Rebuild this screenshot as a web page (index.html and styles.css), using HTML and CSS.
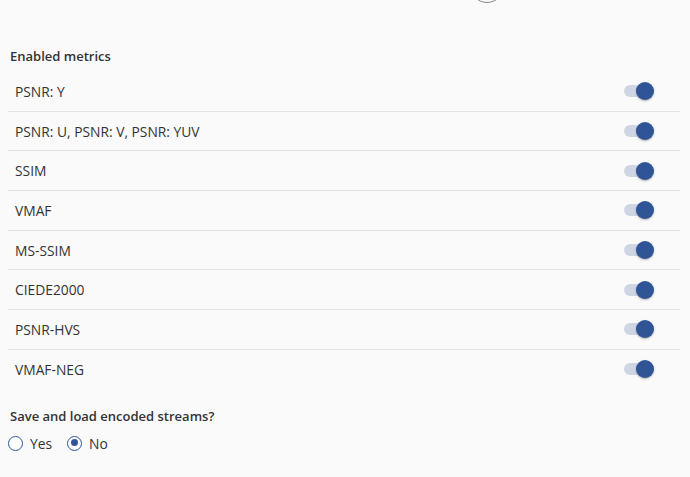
FILE: index.html
```
<!doctype html>
<html lang="en">
  <head>
    <meta charset="utf-8" />
    <title>Settings</title>
    <link rel="stylesheet" href="styles.css">
  </head>
  <body>
    <div class="page">
      <div class="top-ring"></div>

      <div class="section-title">Enabled metrics</div>
      <ul class="metric-list">
        <li class="metric-row"><span>PSNR: Y</span><span class="toggle on"><span class="knob"></span></span></li>
        <li class="metric-row"><span>PSNR: U, PSNR: V, PSNR: YUV</span><span class="toggle on"><span class="knob"></span></span></li>
        <li class="metric-row"><span>SSIM</span><span class="toggle on"><span class="knob"></span></span></li>
        <li class="metric-row"><span>VMAF</span><span class="toggle on"><span class="knob"></span></span></li>
        <li class="metric-row"><span>MS-SSIM</span><span class="toggle on"><span class="knob"></span></span></li>
        <li class="metric-row"><span>CIEDE2000</span><span class="toggle on"><span class="knob"></span></span></li>
        <li class="metric-row"><span>PSNR-HVS</span><span class="toggle on"><span class="knob"></span></span></li>
        <li class="metric-row"><span>VMAF-NEG</span><span class="toggle on"><span class="knob"></span></span></li>
      </ul>

      <div class="section-title streams-title">Save and load encoded streams?</div>
      <div class="radio-group">
        <label class="radio"><span class="radio-dot"></span>Yes</label>
        <label class="radio"><span class="radio-dot checked"></span>No</label>
      </div>
    </div>
  </body>
</html>
```

FILE: styles.css
```
html,
body {
  margin: 0;
  padding: 0;
  background: #fafafa;
  font-family: 'Open Sans', 'Noto Sans', sans-serif;
  color: #333;
  overflow: hidden;
}
.page {
  padding: 0 10px 0 8px;
  width: 672px;
}
.top-ring {
  width: 32px;
  height: 32px;
  border: 1.5px solid #888;
  border-radius: 50%;
  margin: -31px 0 0 462px;
}
.section-title {
  font-size: 13px;
  font-weight: 600;
  padding-left: 2px;
  margin-top: 42px;
  height: 22px;
  line-height: 22px;
}
.metric-list {
  list-style: none;
  margin: 5px 0 0 0;
  padding: 0;
}
.metric-row {
  display: flex;
  align-items: center;
  justify-content: space-between;
  height: 38.7px;
  padding: 0 26px 0 7px;
  font-size: 13.8px;
  border-bottom: 1px solid #e3e3e3;
}
.metric-row:last-child {
  border-bottom: none;
}
.toggle {
  position: relative;
  width: 22px;
  height: 12px;
  border-radius: 6px;
  background: #cfd6e3;
  margin-right: 8px;
}
.toggle .knob {
  position: absolute;
  top: -3px;
  left: 12px;
  width: 18px;
  height: 18px;
  border-radius: 50%;
  background: #2f5597;
  box-shadow: 0 1px 2px rgba(0, 0, 0, 0.3);
}
.streams-title {
  margin-top: 16px;
}
.radio-group {
  display: flex;
  gap: 15px;
  margin-top: 7px;
  font-size: 13.8px;
}
.radio {
  display: flex;
  align-items: center;
  gap: 7px;
}
.radio-dot {
  box-sizing: border-box;
  width: 15px;
  height: 15px;
  border: 1.5px solid #2f5597;
  border-radius: 50%;
  background: #fff;
  position: relative;
}
.radio-dot.checked::after {
  content: '';
  position: absolute;
  top: 2.5px;
  left: 2.5px;
  width: 7px;
  height: 7px;
  border-radius: 50%;
  background: #2f5597;
}
```
